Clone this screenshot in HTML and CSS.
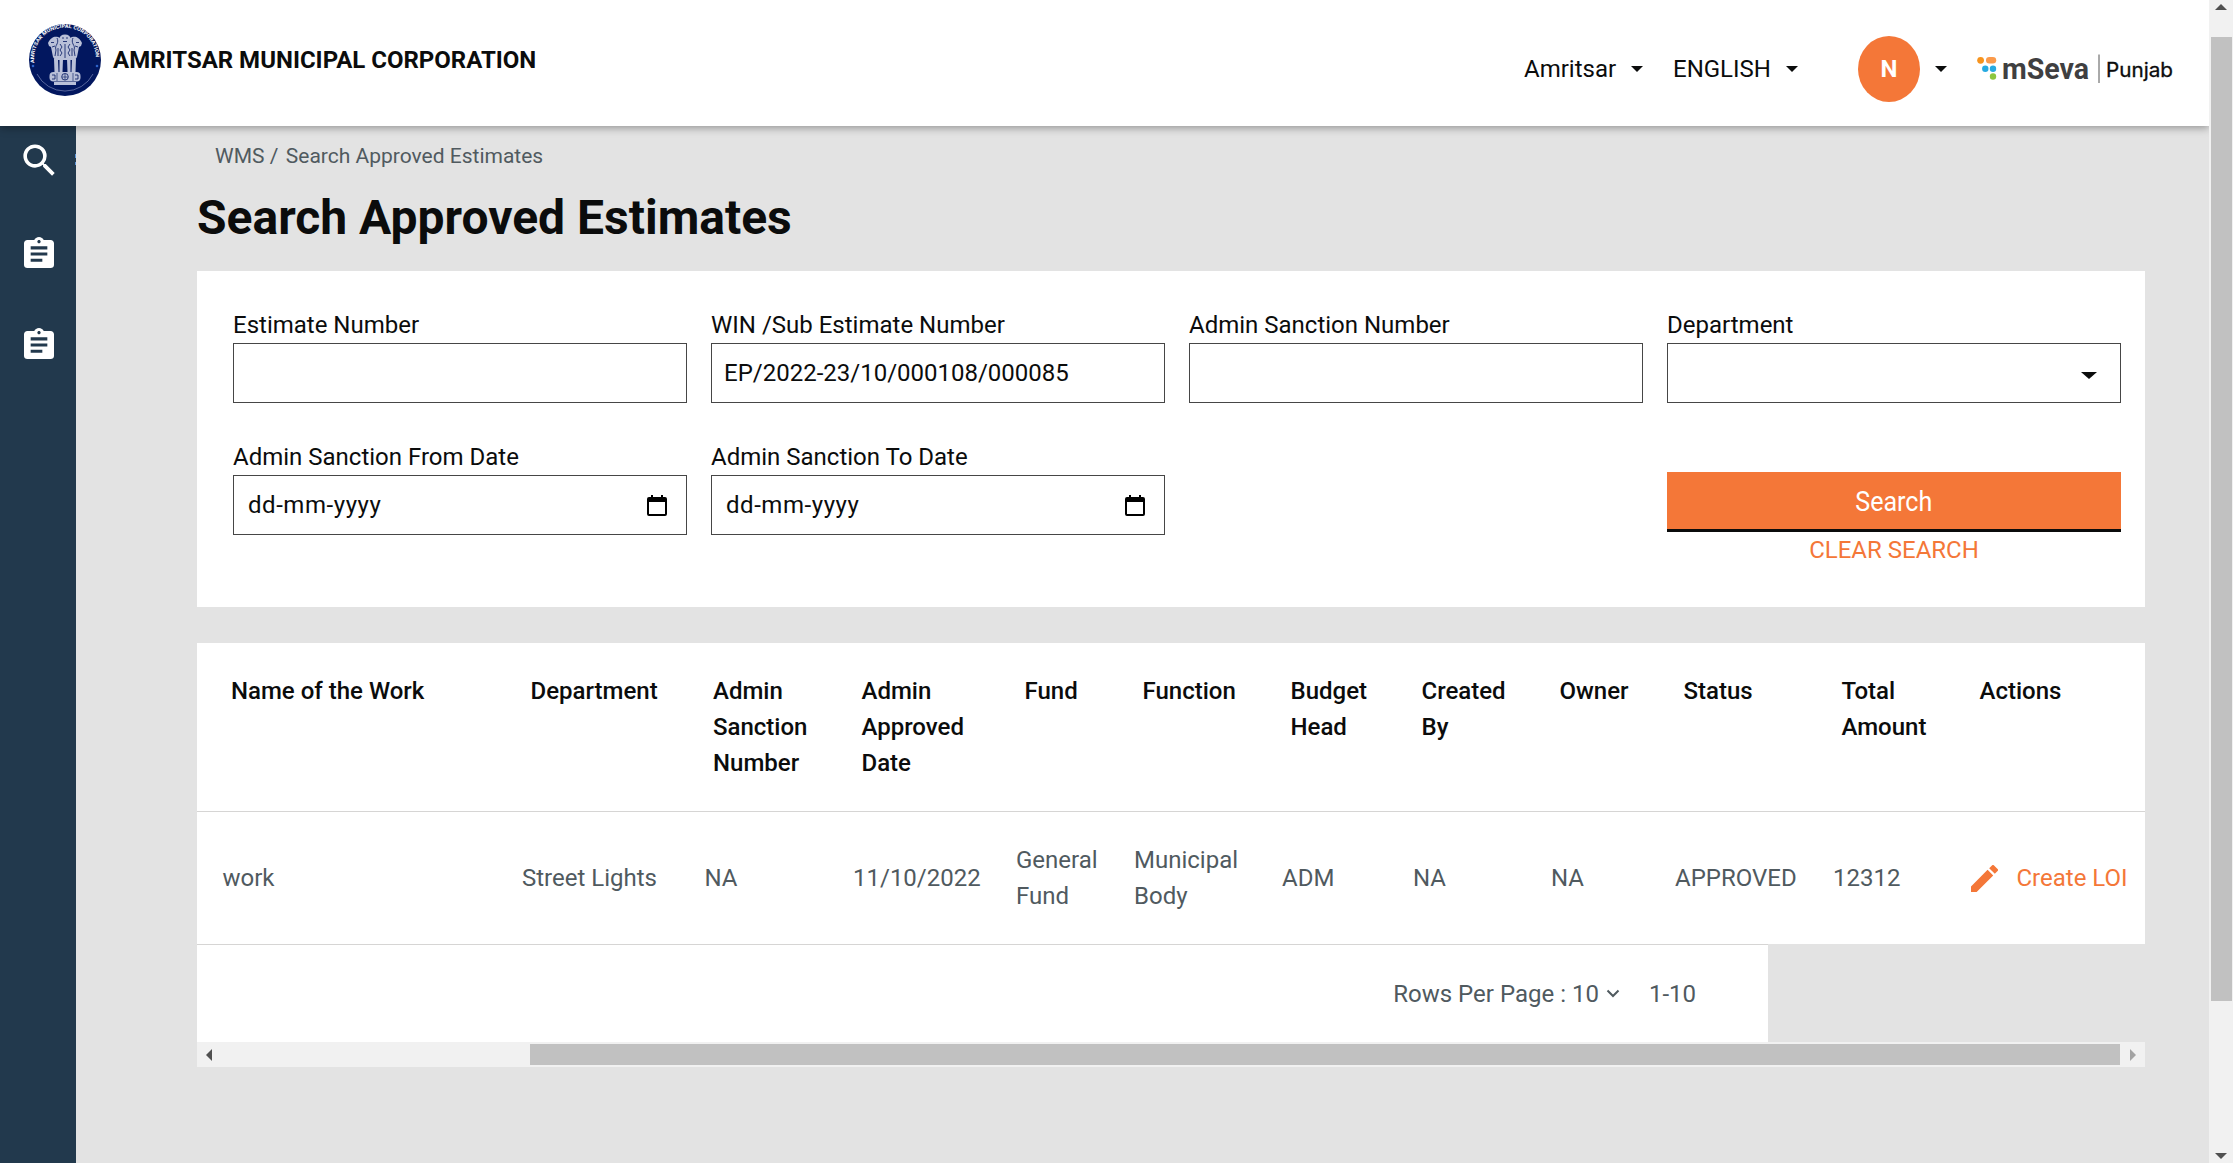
FILE: index.html
```html
<!DOCTYPE html>
<html lang="en">
<head>
<meta charset="utf-8">
<title>Search Approved Estimates</title>
<link rel="stylesheet" href="styles.css">
</head>
<body>
<div class="app">
  <div class="viewport">
    <header class="topbar">
      <svg class="emblem" viewBox="0 0 72 72">
        <defs><path id="ring" d="M5.300 39A31 31 0 1 1 66.700 39"/></defs>
        <circle cx="36" cy="36" r="36" fill="#02175f"/>
        <text class="ring-text"><textPath href="#ring" textLength="100" lengthAdjust="spacingAndGlyphs">AMRITSAR MUNICIPAL CORPORATION</textPath></text>
        <circle cx="4" cy="42" r="1.300" fill="#2d62c8"/><circle cx="68" cy="42" r="1.300" fill="#2d62c8"/>
        <path d="M8 50a31.500 31.500 0 0 0 56 0" fill="none" stroke="#8e98c4" stroke-width=".6"/>
        <g fill="#b9c0d8">
          <path d="M30.500 15c0-3 2-4.500 5.500-4.500s5.500 1.500 5.500 4.500c0 1-.5 2-1 3h-9c-.5-1-1-2-1-3z"/>
          <path d="M31 14c-2-1.500-6-2-8 0-2 1-3 3-4 5l1 3 2 1 1 5 1 5 2 3h20l2-3 1-5 1-5 2-1 1-3c-1-2-2-4-4-5-2-2-6-1.500-8 0z"/>
          <path d="M25 35h4l.5 13h-4zM30.500 35h3.500l-.5 13h-3zM38 35h3.500l0 13h-3zM43 35h4l-.5 13h-4z"/>
          <rect x="20.500" y="48" width="31" height="9.500" rx="4"/>
          <path d="M25 58h22v3H25z"/>
        </g>
        <g fill="none" stroke="#02175f" stroke-width=".8">
          <path d="M33 14h2M37 14h2M34 17.500h4M22 18.500h3M47 18.500h3M28 14c1 2 1 4 0 6s-2 3-1 6l-1 6M44 14c-1 2-1 4 0 6s2 3 1 6l1 6M31 20l2 3-2 3 2 3-2 3M41 20l-2 3 2 3-2 3 2 3M36 20v14M23 23l3-1M49 23l-3-1M29 24v8M43 24v8"/>
          <circle cx="36" cy="52.800" r="3.300"/><path d="M36 50v6M33 53h6M28 49v8M44 49v8" stroke-width=".6"/>
          <path d="M23 51h3v4h-3M46 51h3v4h-3"/>
        </g>
      </svg>
      <div class="corp">AMRITSAR MUNICIPAL CORPORATION</div>
      <div class="topmenu">
        <div class="menu city"><span>Amritsar</span><i class="caret"></i></div>
        <div class="menu lang"><span>ENGLISH</span><i class="caret"></i></div>
        <div class="menu user"><span class="avatar">N</span><i class="caret"></i></div>
        <svg class="mseva" viewBox="0 0 200 40">
          <circle cx="3.600" cy="11.300" r="3.400" fill="#f7941e"/><rect x="9" y="8" width="10.200" height="6.600" rx="3.300" fill="#fb9a4b"/>
          <circle cx="8.300" cy="19.700" r="3.200" fill="#27aae1"/><circle cx="16" cy="19.700" r="3.200" fill="#27aae1"/>
          <circle cx="16" cy="27.500" r="3.200" fill="#8cc63f"/>
          <text class="mseva-name" x="25" y="30" textLength="87" lengthAdjust="spacingAndGlyphs">mSeva</text>
          <path d="M122 5.500v28.500" stroke="#555" stroke-width="1"/>
          <text class="mseva-state" x="129" y="28" textLength="67" lengthAdjust="spacingAndGlyphs">Punjab</text>
        </svg>
      </div>
    </header>
    <div class="body">
      <nav class="side">
        <svg class="s-search" viewBox="0 0 24 24"><path d="M15.500 14h-.79l-.28-.27A6.471 6.471 0 0 0 16 9.500 6.500 6.500 0 1 0 9.500 16c1.610 0 3.090-.59 4.230-1.570l.27.28v.79l5 4.990L20.490 19l-4.990-5zm-6 0C7.010 14 5 11.990 5 9.500S7.010 5 9.500 5 14 7.010 14 9.500 11.990 14 9.500 14z"/></svg>
        <svg class="s-clip" viewBox="3 1 18 20" preserveAspectRatio="none"><path d="M19 3h-4.180C14.400 1.840 13.300 1 12 1c-1.300 0-2.400.84-2.820 2H5c-1.100 0-2 .9-2 2v14c0 1.100.9 2 2 2h14c1.100 0 2-.9 2-2V5c0-1.100-.9-2-2-2zm-7 0c.55 0 1 .45 1 1s-.45 1-1 1-1-.45-1-1 .45-1 1-1zm2 14H7v-2h7v2zm3-4H7v-2h10v2zm0-4H7V7h10v2z"/></svg>
        <svg class="s-clip" viewBox="3 1 18 20" preserveAspectRatio="none"><path d="M19 3h-4.180C14.400 1.840 13.300 1 12 1c-1.300 0-2.400.84-2.820 2H5c-1.100 0-2 .9-2 2v14c0 1.100.9 2 2 2h14c1.100 0 2-.9 2-2V5c0-1.100-.9-2-2-2zm-7 0c.55 0 1 .45 1 1s-.45 1-1 1-1-.45-1-1 .45-1 1-1zm2 14H7v-2h7v2zm3-4H7v-2h10v2zm0-4H7V7h10v2z"/></svg>
        <div class="clipped"></div>
      </nav>
      <main class="main">
        <div class="crumbs"><span>WMS /</span><span>Search Approved Estimates</span></div>
        <h1>Search Approved Estimates</h1>
        <section class="filters">
          <label class="field"><span>Estimate Number</span><div class="box"></div></label>
          <label class="field"><span>WIN /Sub Estimate Number</span><div class="box"><b class="val">EP/2022-23/10/000108/000085</b></div></label>
          <label class="field"><span>Admin Sanction Number</span><div class="box"></div></label>
          <label class="field"><span>Department</span><div class="box select"><i class="caret big"></i></div></label>
          <label class="field"><span>Admin Sanction From Date</span><div class="box date"><b class="val">dd-mm-yyyy</b><svg viewBox="0 0 20 21"><path d="M4 0h2v2h8V0h2v2h2a2 2 0 0 1 2 2v15a2 2 0 0 1-2 2H2a2 2 0 0 1-2-2V4a2 2 0 0 1 2-2h2zM2 7v12h16V7z"/></svg></div></label>
          <label class="field"><span>Admin Sanction To Date</span><div class="box date"><b class="val">dd-mm-yyyy</b><svg viewBox="0 0 20 21"><path d="M4 0h2v2h8V0h2v2h2a2 2 0 0 1 2 2v15a2 2 0 0 1-2 2H2a2 2 0 0 1-2-2V4a2 2 0 0 1 2-2h2zM2 7v12h16V7z"/></svg></div></label>
          <div class="submit"><div class="btn"><span>Search</span></div><div class="clear">CLEAR SEARCH</div></div>
        </section>
        <section class="results">
          <table>
            <colgroup><col class="c1"><col class="c2"><col class="c3"><col class="c4"><col class="c5"><col class="c6"><col class="c7"><col class="c8"><col class="c9"><col class="c10"><col class="c11"><col class="c12"></colgroup>
            <thead><tr><th>Name of the Work</th><th>Department</th><th>Admin<br>Sanction<br>Number</th><th>Admin<br>Approved<br>Date</th><th>Fund</th><th>Function</th><th>Budget<br>Head</th><th>Created<br>By</th><th>Owner</th><th>Status</th><th>Total<br>Amount</th><th>Actions</th></tr></thead>
            <tbody><tr><td>work</td><td>Street Lights</td><td>NA</td><td>11/10/2022</td><td>General<br>Fund</td><td>Municipal<br>Body</td><td>ADM</td><td>NA</td><td>NA</td><td>APPROVED</td><td>12312</td><td><a class="loi"><svg viewBox="3 3 18 18"><path d="M3 17.250V21h3.750L17.810 9.940l-3.750-3.750L3 17.250zM20.710 7.040a1 1 0 0 0 0-1.410l-2.340-2.340a1 1 0 0 0-1.410 0l-1.830 1.830 3.750 3.750 1.830-1.830z"/></svg><span>Create LOI</span></a></td></tr></tbody>
          </table>
          <div class="pager"><span>Rows Per Page : 10</span><svg viewBox="0 0 14 9"><path d="M1.500 1.500L7 7l5.500-5.500"/></svg><span>1-10</span></div>
          <div class="hbar"><i class="al"></i><div class="hthumb"></div><i class="ar"></i></div>
        </section>
      </main>
    </div>
  </div>
  <div class="vbar"><i class="au"></i><div class="vthumb"></div><i class="ad"></i></div>
</div>
</body>
</html>
```

FILE: styles.css
```css
* { box-sizing: border-box; }
body { margin: 0; font: 24px/36px Roboto, sans-serif; color: #0b0c0c; background: #e3e3e3; }
svg { display: block; flex: none; }
i, b { font: inherit; }
.app { display: flex; width: 2233px; height: 1163px; overflow: hidden; }
.viewport { width: 2209px; display: flex; flex-direction: column; overflow: hidden; }
.topbar { height: 126px; flex: none; display: flex; align-items: flex-start; background: #fff; box-shadow: 0 2px 8px rgba(0,0,0,.35); position: relative; z-index: 1; padding-left: 29px; }
.emblem { width: 72px; height: 72px; margin-top: 24px; }
.ring-text { font: 700 5px Roboto, sans-serif; fill: #fff; }
.corp { margin: 42px 0 0 12px; font-weight: 700; white-space: nowrap; }
.topmenu { display: flex; align-items: center; margin: 36px 32px 0 auto; height: 66px; }
.menu { display: flex; align-items: center; }
.caret { width: 0; height: 0; border: 6px solid transparent; border-top-color: #0b0c0c; border-bottom: 0; margin-left: 15px; }
.city { width: 149px; }
.lang { width: 185px; }
.user { width: 119px; }
.avatar { width: 62px; height: 66px; border-radius: 50%; background: #f47738; color: #fff; font-weight: 700; text-align: center; line-height: 66px; }
.mseva { width: 200px; height: 40px; }
.mseva-name { font: 700 30px Roboto, sans-serif; fill: #3f3f41; }
.mseva-state { font: 400 20px Inter, sans-serif; fill: #0b0c0c; stroke: #0b0c0c; stroke-width: .3px; }
.body { display: flex; flex: 1; }
.side { width: 76px; flex: none; background: #22394d; display: flex; flex-direction: column; align-items: center; position: relative; }
.side svg { fill: #fff; }
.s-search { width: 43px; height: 43px; margin: 13px 0 55px 2px; }
.s-clip { width: 30px; height: 31px; margin: 0 0 60px 2px; }
.clipped { position: absolute; right: 0; top: 28px; width: 1px; height: 11px; border: solid #5a94d8; border-width: 4px 0 3px; }
.main { padding: 12px 64px 0 121px; flex: 1; }
.crumbs { display: flex; gap: 7.500px; padding-left: 18px; font-size: 21px; color: #505a5f; }
h1 { margin: 16px 0 25px; font: 700 48px/56px Roboto, sans-serif; }
.filters { height: 336px; background: #fff; padding: 36px 24px 0 36px; display: grid; grid-template: 132px 132px / repeat(4, 454px); column-gap: 24px; }
.field > span { display: block; }
.box { height: 60px; border: 1px solid #464646; display: flex; align-items: center; justify-content: space-between; padding-left: 12px; }
.date { padding-left: 14px; }
.date .val { letter-spacing: .55px; }
.date svg { width: 20px; height: 21px; margin-right: 19px; }
.select { justify-content: flex-end; }
.caret.big { border-width: 7px 8px 0; margin: 4px 23px 0 0; }
.submit { grid-column: 4; padding-top: 33px; text-align: center; }
.btn { height: 60px; background: #f47738; border-bottom: 3px solid #0b0c0c; color: #fff; font-size: 28.500px; line-height: 60px; }
.btn span { display: inline-block; transform: scaleX(.88); }
.clear { color: #f47738; line-height: 36px; }
.results { margin-top: 36px; }
table { width: 1948px; table-layout: fixed; border-collapse: separate; border-spacing: 0; background: #fff; }
th { height: 169px; padding: 30px 0 0 34px; text-align: left; vertical-align: top; font-weight: 500; white-space: nowrap; border-bottom: 1px solid #d6d5d4; }
td { height: 132px; padding: 0 0 0 25.500px; color: #505a5f; white-space: nowrap; vertical-align: middle; }
.c1 { width: 299.500px; } .c2 { width: 182.500px; } .c3 { width: 148.500px; } .c4 { width: 163px; }
.c5 { width: 118px; } .c6 { width: 148px; } .c7 { width: 131px; } .c8 { width: 138px; }
.c9 { width: 124px; } .c10 { width: 158px; } .c11 { width: 138px; } .c12 { width: 199.500px; }
.loi { display: flex; align-items: center; gap: 18.500px; color: #f47738; }
.loi svg { width: 27px; height: 27px; fill: #f47738; }
.pager { width: 1571px; height: 98px; background: #fff; border-top: 1px solid #d6d5d4; display: flex; align-items: center; justify-content: flex-end; padding-right: 72px; color: #505a5f; }
.pager svg { width: 14px; height: 9px; margin: 0 29px 0 7px; fill: none; stroke: #505a5f; stroke-width: 2; }
.hbar { height: 25px; background: #f1f1f1; display: flex; align-items: center; padding: 0 9px; }
.hthumb { width: 1590px; height: 21px; background: #c1c1c1; margin: 0 10px 0 auto; }
.al, .ar { border: 6px solid transparent; width: 0; height: 0; }
.al { border-right-color: #505050; border-left: 0; }
.ar { border-left-color: #a3a3a3; border-right: 0; }
.vbar { width: 24px; background: #f1f1f1; display: flex; flex-direction: column; align-items: center; padding: 4px 0; }
.vthumb { width: 21px; height: 964px; background: #c1c1c1; margin: 27px 0 auto; }
.au, .ad { border: 6px solid transparent; width: 0; height: 0; }
.au { border-bottom-color: #505050; border-top: 0; }
.ad { border-top-color: #505050; border-bottom: 0; }
```
